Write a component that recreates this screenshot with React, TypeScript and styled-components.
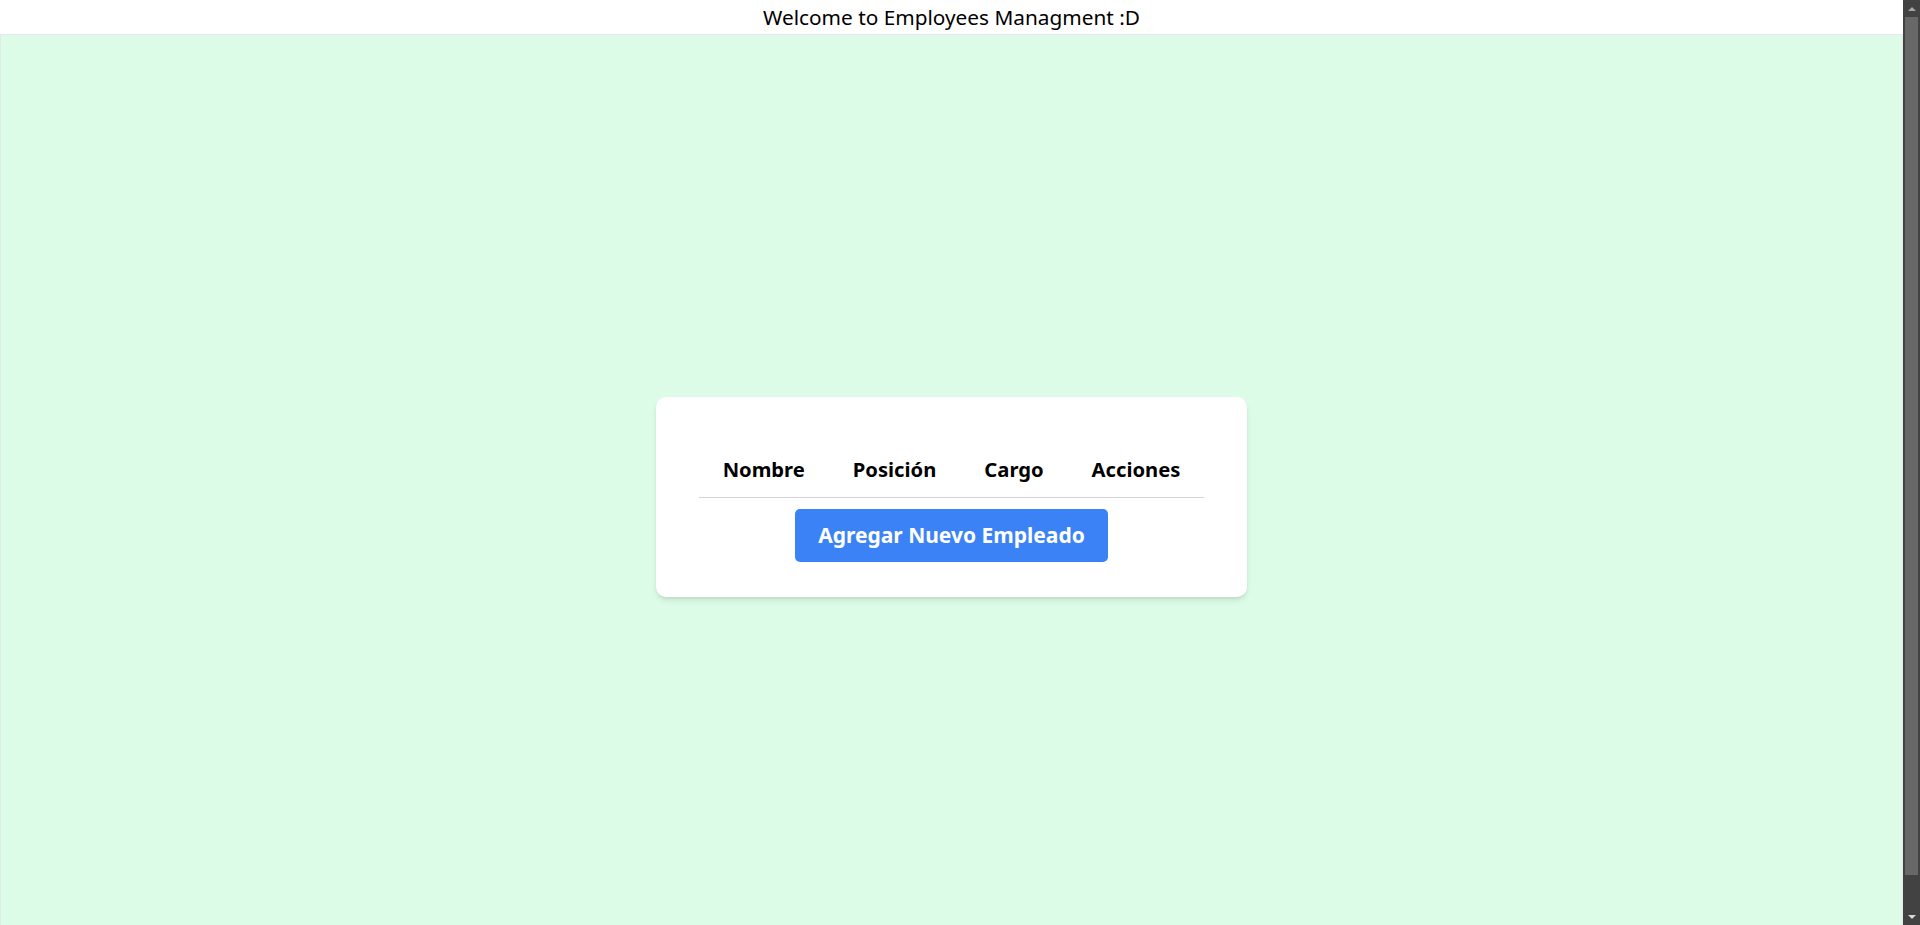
import React from "react";
import styled, { createGlobalStyle } from "styled-components";

const GlobalStyle = createGlobalStyle`
  html, body {
    margin: 0;
    padding: 0;
    font-family: "Noto Sans", "Open Sans", Arial, sans-serif;
    color: #000;
    background: #ffffff;
  }
  * { box-sizing: border-box; }
  ::-webkit-scrollbar { width: 0; height: 0; }
`;

const Page = styled.div`
  padding-right: 17px;
`;

const Header = styled.header`
  height: 34px;
  display: flex;
  align-items: center;
  justify-content: center;
  background: #ffffff;
`;

const Title = styled.h1`
  margin: 0;
  font-size: 20.8px;
  font-weight: 400;
  line-height: 28px;
`;

const Main = styled.main`
  min-height: 100vh;
  background: #dcfce7;
  border: 1px solid #e5e7eb;
  display: flex;
  align-items: center;
  justify-content: center;
`;

const Card = styled.section`
  background: #ffffff;
  border-radius: 10px;
  padding: 48px 43px 35px;
  box-shadow: 0 4px 6px -1px rgba(0, 0, 0, 0.1), 0 2px 4px -2px rgba(0, 0, 0, 0.1);
  display: flex;
  flex-direction: column;
  align-items: center;
`;

const Table = styled.table`
  border-collapse: collapse;
`;

const HeadRow = styled.tr`
  border-bottom: 1px solid #d1d5db;
`;

const Th = styled.th`
  padding: 10px 24px 14px;
  font-size: 20.2px;
  line-height: 28px;
  font-weight: 700;
  text-align: center;
`;

const AddButton = styled.button`
  margin-top: 11px;
  padding: 12px 23px;
  border: none;
  border-radius: 5px;
  background: #3b82f6;
  color: #ffffff;
  font-family: inherit;
  font-size: 21px;
  line-height: 29px;
  font-weight: 700;
  cursor: pointer;
`;

/* Browser scrollbar as seen in the screenshot, overlaid on the viewport edge */
const ScrollRail = styled.div`
  position: fixed;
  top: 0;
  right: 0;
  width: 17px;
  height: 100vh;
  background: #424242;
  display: flex;
  flex-direction: column;
  align-items: center;
`;

const ArrowButton = styled.div<{ $down?: boolean }>`
  height: 17px;
  width: 17px;
  display: flex;
  align-items: center;
  justify-content: center;
  &::before {
    content: "";
    width: 0;
    height: 0;
    border-left: 4px solid transparent;
    border-right: 4px solid transparent;
    ${(p) =>
      p.$down
        ? "border-top: 4px solid #d8d8d8;"
        : "border-bottom: 4px solid #a6a6a6;"}
  }
`;

const TrackArea = styled.div`
  flex: 1;
  width: 100%;
  padding: 0 2px;
`;

const Thumb = styled.div`
  height: 858px;
  background: #686868;
`;

const columns = ["Nombre", "Posición", "Cargo", "Acciones"];

export default function App() {
  return (
    <>
      <GlobalStyle />
      <Page>
        <Header>
          <Title>Welcome to Employees Managment :D</Title>
        </Header>
        <Main>
          <Card>
            <Table>
              <thead>
                <HeadRow>
                  {columns.map((c) => (
                    <Th key={c}>{c}</Th>
                  ))}
                </HeadRow>
              </thead>
              <tbody />
            </Table>
            <AddButton>Agregar Nuevo Empleado</AddButton>
          </Card>
        </Main>
      </Page>
      <ScrollRail aria-hidden="true">
        <ArrowButton />
        <TrackArea>
          <Thumb />
        </TrackArea>
        <ArrowButton $down />
      </ScrollRail>
    </>
  );
}
